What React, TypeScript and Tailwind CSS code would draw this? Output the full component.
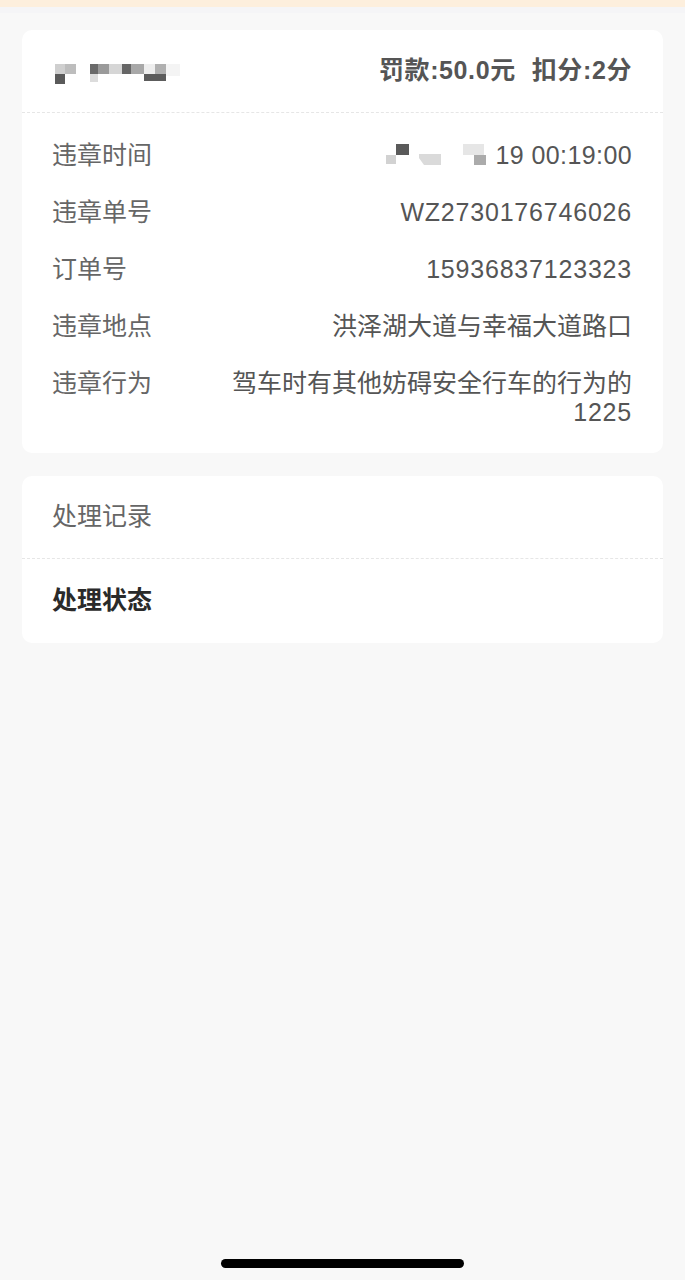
import React from "react";

const font = { fontFamily: '"Liberation Sans", "Noto Sans CJK SC", sans-serif' };

function PlateMosaic() {
  const r: [number, number, number, number, string][] = [
    [0, 8, 10, 10, "#cfcfcf"],
    [10, 8, 11, 10, "#bdbdbd"],
    [0, 18, 10, 10, "#5a5a5a"],
    [35, 8, 8, 10, "#6a6a6a"],
    [43, 8, 11, 10, "#9a9a9a"],
    [35, 18, 8, 8, "#dcdcdc"],
    [54, 8, 13, 10, "#d6d6d6"],
    [67, 8, 9, 10, "#666666"],
    [76, 8, 13, 10, "#a8a8a8"],
    [89, 8, 11, 10, "#eeeeee"],
    [100, 8, 11, 10, "#b0b0b0"],
    [89, 18, 22, 7, "#5c5c5c"],
    [111, 8, 14, 12, "#f4f4f4"],
  ];
  return (
    <svg width="126" height="30" viewBox="0 0 126 30" className="block">
      {r.map(([x, y, w, h, c], i) => (
        <rect key={i} x={x} y={y} width={w} height={h} fill={c} />
      ))}
    </svg>
  );
}

function TimeMosaic() {
  return (
    <svg width="104" height="26" viewBox="0 0 104 26" className="block">
      <rect x="0" y="12" width="10" height="9" fill="#d2d2d2" />
      <rect x="10" y="1" width="13" height="11" fill="#5a5a5a" />
      <polygon points="33,11 55,11 55,22 38,22 33,15" fill="#dadada" />
      <rect x="77" y="1" width="21" height="11" fill="#e6e6e6" />
      <rect x="88" y="12" width="12" height="10" fill="#ababab" />
    </svg>
  );
}

function Row({ label, children }: { label: string; children: React.ReactNode }) {
  return (
    <div className="flex items-start justify-between text-[25px] leading-[29px]">
      <div className="text-[#666] shrink-0 w-[160px]">{label}</div>
      <div className="text-[#555] text-right flex-1 flex justify-end">{children}</div>
    </div>
  );
}

export default function App() {
  return (
    <div className="min-h-[1280px] bg-[#f8f8f8] relative" style={font}>
      <div className="h-[7px] bg-[#fdefdd]" />
      <div className="h-[6px] bg-[#f5f5f7]" />
      <div className="px-[22px] pt-[17px] flex flex-col gap-[23px]">
        <div className="bg-white rounded-[10px]">
          <div className="h-[83px] flex items-center justify-between pl-[33px] pr-[31px] border-b border-dashed border-[#e6e6e6]">
            <PlateMosaic />
            <div className="flex gap-[16px] text-[25px] font-bold text-[#555] tracking-[0.6px]">
              <span>罚款:50.0元</span>
              <span>扣分:2分</span>
            </div>
          </div>
          <div className="pl-[30px] pr-[31px] pt-[28px] pb-[26px] flex flex-col gap-[28px]">
            <Row label="违章时间">
              <div className="flex items-center gap-[6px]">
                <TimeMosaic />
                <span className="tracking-[0.4px]">19 00:19:00</span>
              </div>
            </Row>
            <Row label="违章单号">
              <span className="tracking-[0.8px]">WZ2730176746026</span>
            </Row>
            <Row label="订单号">
              <span className="tracking-[0.8px]">15936837123323</span>
            </Row>
            <Row label="违章地点">洪泽湖大道与幸福大道路口</Row>
            <Row label="违章行为">
              <div className="text-right">
                驾车时有其他妨碍安全行车的行为的
                <br />
                <span className="tracking-[0.8px]">1225</span>
              </div>
            </Row>
          </div>
        </div>
        <div className="bg-white rounded-[10px]">
          <div className="h-[83px] flex items-center pl-[30px] border-b border-dashed border-[#e6e6e6] text-[25px] text-[#666]">
            处理记录
          </div>
          <div className="h-[84px] flex items-center pl-[30px] text-[25px] font-bold text-[#2a2a2a]">
            处理状态
          </div>
        </div>
      </div>
      <div className="absolute left-[221px] top-[1259px] w-[243px] h-[9px] rounded-full bg-black" />
    </div>
  );
}
